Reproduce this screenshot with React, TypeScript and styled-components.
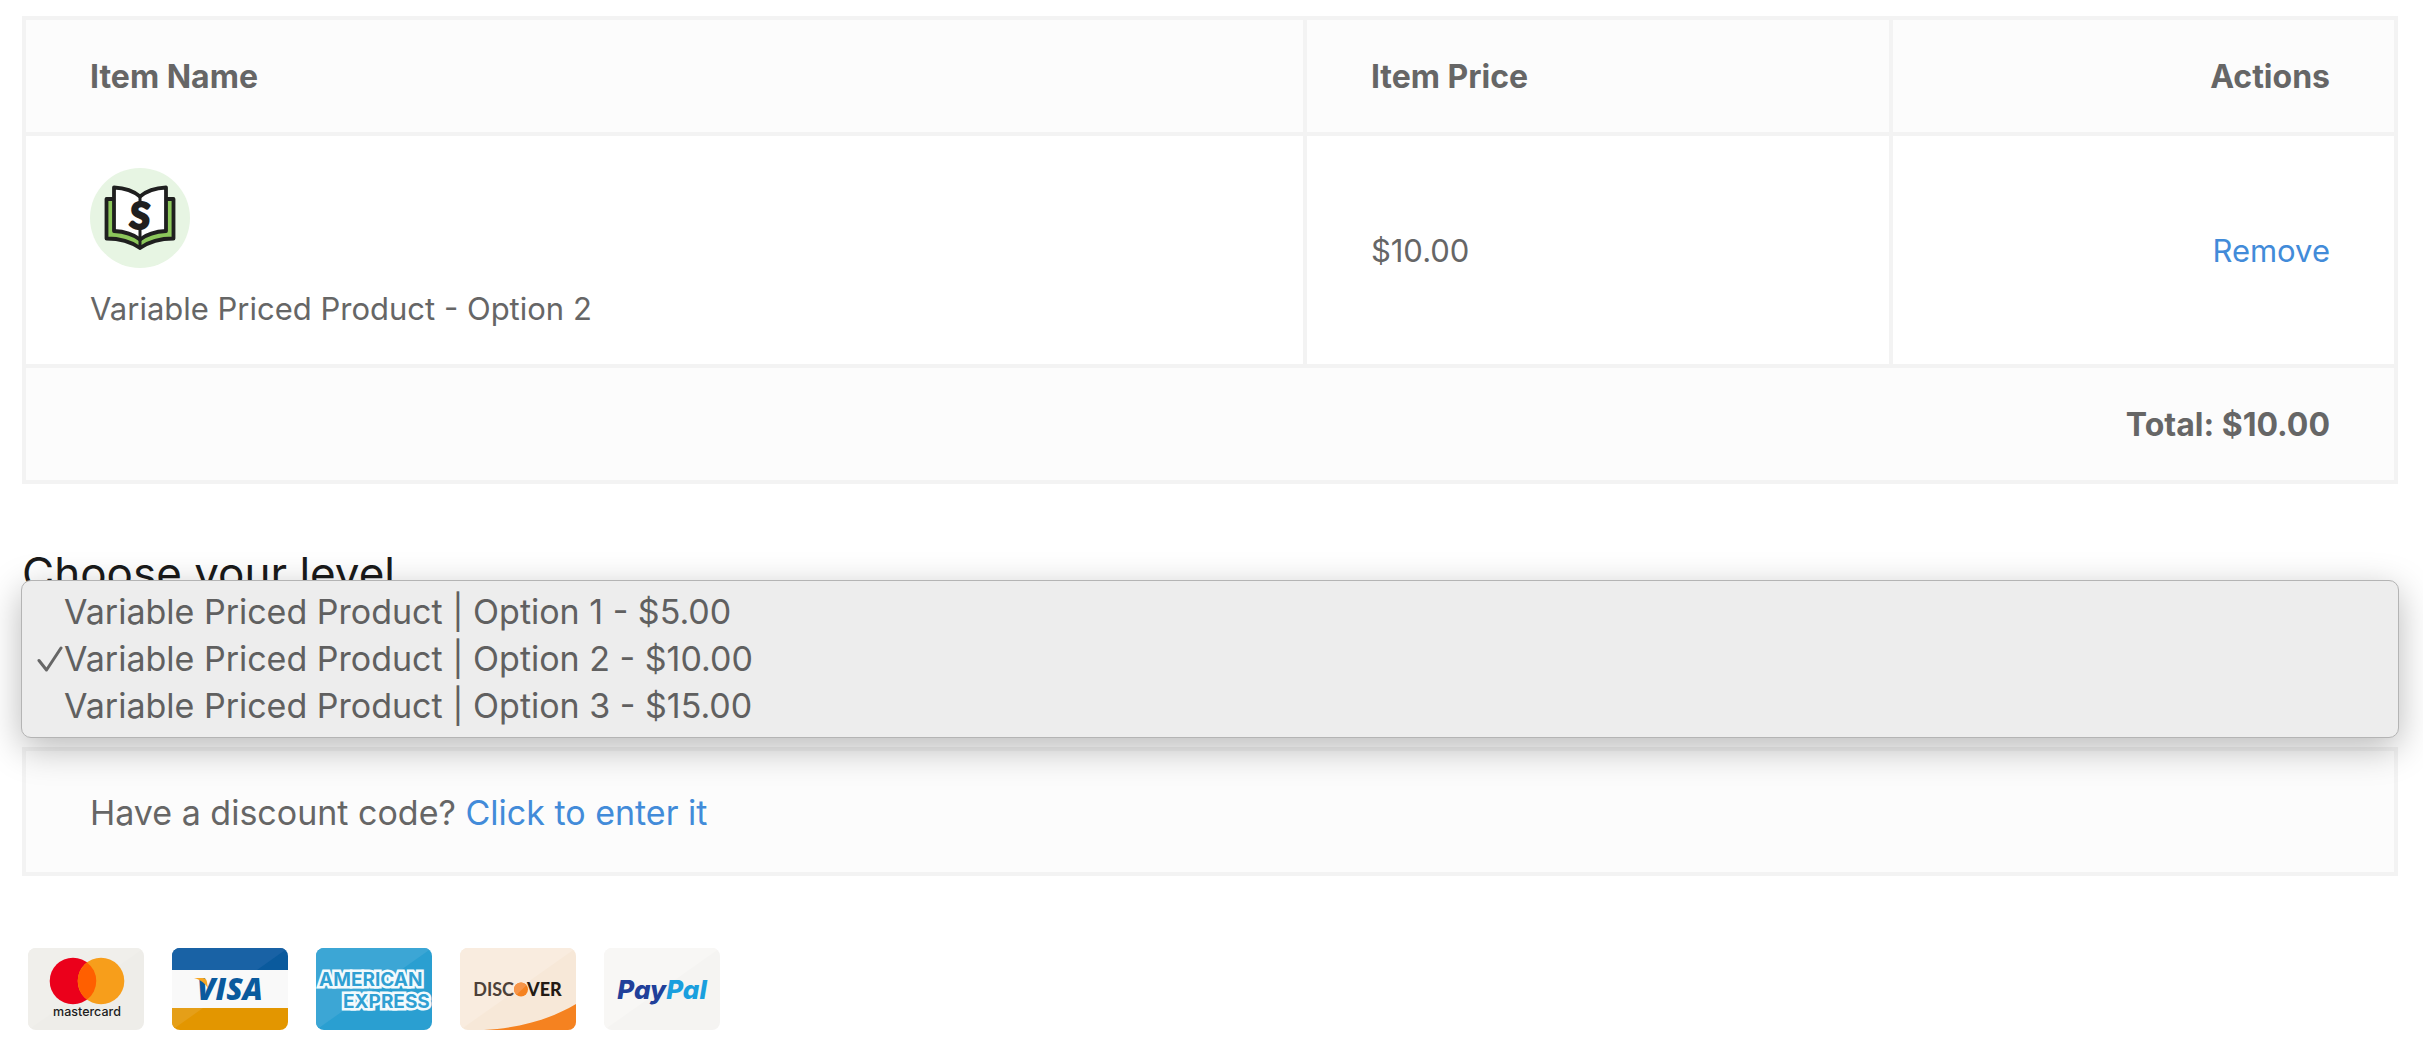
import React, { useState } from "react";
import styled, { createGlobalStyle } from "styled-components";

const GlobalStyle = createGlobalStyle`
  *, *::before, *::after { box-sizing: border-box; }
  body {
    margin: 0;
    background: #fff;
    color: #666;
    font-family: Inter, "Liberation Sans", sans-serif;
    font-size: 31px;
    line-height: 48px;
  }
`;

const Page = styled.main`
  padding: 16px 25px 24px 22px;
`;

const CartTable = styled.table`
  width: 100%;
  table-layout: fixed;
  border-collapse: collapse;
`;

const Column = styled.col<{ $share: string }>`
  width: ${(p) => p.$share};
`;

const HeadCell = styled.th<{ $end?: boolean }>`
  padding: 33px 64px 31px;
  border: 4px solid #f3f3f3;
  background: #fcfcfc;
  font-size: 32px;
  font-weight: 700;
  text-align: ${(p) => (p.$end ? "right" : "left")};
`;

const Cell = styled.td<{ $end?: boolean }>`
  padding: 32px 64px 31px;
  border: 4px solid #f3f3f3;
  vertical-align: middle;
  text-align: ${(p) => (p.$end ? "right" : "left")};
`;

const ItemBlock = styled.div`
  display: flex;
  flex-direction: column;
  gap: 17px;
`;

const TextLink = styled.a`
  color: #428bd9;
  text-decoration: none;
`;

const LevelSection = styled.section`
  margin: 61px 0 53px;
`;

const LevelHeading = styled.h2`
  margin: 0 0 23px;
  color: #1a1a1a;
  font-size: 44px;
  font-weight: 400;
  line-height: 56px;
`;

const LevelField = styled.div`
  position: relative;
`;

const LevelSelect = styled.select`
  display: block;
  width: 100%;
  height: 70px;
  padding: 0 40px;
  border: 2px solid #ddd;
  border-radius: 8px;
  background: #fff;
  color: #666;
  font: inherit;
`;

const Menu = styled.div`
  position: absolute;
  top: -44px;
  left: -1px;
  right: -1px;
  display: flex;
  flex-direction: column;
  padding: 7px 0 8px;
  border: 1px solid #b4b4b4;
  border-radius: 10px;
  background: #ededed;
  box-shadow: 0 10px 36px rgba(0, 0, 0, 0.28);
`;

const MenuOption = styled.button`
  display: flex;
  align-items: center;
  padding: 0 13px;
  border: 0;
  background: none;
  color: #606060;
  font-family: inherit;
  font-size: 34px;
  font-weight: 400;
  line-height: 47px;
  text-align: left;
`;

const CheckSlot = styled.span`
  display: flex;
  justify-content: center;
  width: 29px;
`;

const DiscountBox = styled.section`
  padding: 37px 64px 35px;
  border: 4px solid #f3f3f3;
  background: #fcfcfc;
  font-size: 34px;
  line-height: 49px;
`;

const CardList = styled.ul`
  display: flex;
  flex-wrap: wrap;
  gap: 28px;
  margin: 72px 0 0;
  padding: 0 6px;
  list-style: none;
`;

const CardItem = styled.li`
  width: 116px;
  height: 82px;
  overflow: hidden;
  border-radius: 8px;
`;

const Drawing = styled.svg`
  display: block;
`;

const BookIcon = () => (
  <Drawing width="100" height="100" viewBox="0 0 100 100" role="img" aria-label="Product">
    <circle cx="50" cy="50" r="50" fill="#e7f5e3" />
    <g stroke="#1f1f1f" strokeWidth="3.8" strokeLinejoin="round" strokeLinecap="round">
      <path d="M24 31H16.5V70.5C29 70.5 40 73 50 80C60 73 71 70.5 83.5 70.5V31H76Z" fill="#8cc75b" />
      <path d="M24 19.5C34 20 43 22.5 50 28.5C57 22.5 66 20 76 19.5V63C66 63.5 57 66 50 71.5C43 66 34 63.5 24 63Z" fill="#fff" />
      <path d="M50 28.5V33M50 62V80" fill="none" strokeWidth="3" />
    </g>
    <text x="50" y="61" transform="rotate(6 50 48)" textAnchor="middle" fontFamily="Lato, sans-serif" fontWeight="900" fontSize="37" fill="#1f1f1f" stroke="#1f1f1f" strokeWidth="2" strokeLinejoin="round">S</text>
  </Drawing>
);

const CheckIcon = () => (
  <Drawing width="26" height="28" viewBox="0 0 26 28" aria-hidden="true">
    <path d="M2 15.5L9.5 25L24 3" fill="none" stroke="#666" strokeWidth="3" strokeLinecap="round" strokeLinejoin="round" />
  </Drawing>
);

const Mastercard = () => (
  <Drawing width="116" height="82" viewBox="0 0 116 82" role="img" aria-label="Mastercard">
    <rect width="116" height="82" fill="#eeede9" />
    <path d="M0 0H116L0 82Z" fill="#f0efeb" />
    <circle cx="45" cy="33" r="23.3" fill="#eb001b" />
    <circle cx="73" cy="33" r="23.3" fill="#f79e1b" />
    <path d="M59 14.4A23.3 23.3 0 0 1 59 51.6A23.3 23.3 0 0 1 59 14.4Z" fill="#ff5f00" />
    <text x="59" y="68" textAnchor="middle" fontFamily="Inter, sans-serif" fontWeight="500" fontSize="12.5" fill="#1c1c1c">mastercard</text>
  </Drawing>
);

const Visa = () => (
  <Drawing width="116" height="82" viewBox="0 0 116 82" role="img" aria-label="Visa">
    <rect width="116" height="82" fill="#f9f9f9" />
    <rect width="116" height="22" fill="#0a5a9d" />
    <path d="M0 0H116L85 22H0Z" fill="#1962a5" />
    <rect y="60" width="116" height="22" fill="#e39600" />
    <path d="M0 60H31L0 82Z" fill="#e59f18" />
    <text x="58" y="52" textAnchor="middle" fontFamily="'Open Sans', sans-serif" fontWeight="800" fontStyle="italic" fontSize="30" fill="#0a5a9d">VISA</text>
    <path d="M22 30H30.5C33.5 30 34.5 31.5 35 34L36 41C34 35.5 29 32 22 30Z" fill="#f6a623" />
  </Drawing>
);

const Amex = () => (
  <Drawing width="116" height="82" viewBox="0 0 116 82" role="img" aria-label="American Express">
    <rect width="116" height="82" fill="#2a9fd1" />
    <path d="M0 0H116L0 82Z" fill="#3ca6d5" />
    <g fontFamily="Inter, sans-serif" fontWeight="700" fontSize="19" fill="#2f9fd2" stroke="#f2fafd" strokeWidth="5" paintOrder="stroke" strokeLinejoin="miter">
      <text x="3" y="38">AMERICAN</text>
      <text x="27" y="60">EXPRESS</text>
    </g>
  </Drawing>
);

const Discover = () => (
  <Drawing width="116" height="82" viewBox="0 0 116 82" role="img" aria-label="Discover">
    <rect width="116" height="82" fill="#f7e8d8" />
    <path d="M0 0H116L0 82Z" fill="#f9ecdf" />
    <path d="M24 82C60 80 91 71 116 56V82Z" fill="#f58220" />
    <g fontFamily="Lato, sans-serif" fontSize="18">
      <text x="54" y="48" textAnchor="end" fontWeight="700" fill="#4d4139">DISC</text>
      <text x="67" y="48" fontWeight="900" fill="#231a14">VER</text>
    </g>
    <circle cx="61" cy="41.5" r="7" fill="#f58220" />
    <path d="M54 41.5A7 7 0 0 1 66.5 37.2L56.5 46.8A7 7 0 0 1 54 41.5Z" fill="#f6954a" />
  </Drawing>
);

const PayPal = () => (
  <Drawing width="116" height="82" viewBox="0 0 116 82" role="img" aria-label="PayPal">
    <rect width="116" height="82" fill="#f5f4f2" />
    <path d="M0 0H116L0 82Z" fill="#f8f7f5" />
    <text x="58" y="51" textAnchor="middle" fontFamily="Inter, sans-serif" fontWeight="800" fontStyle="italic" fontSize="26">
      <tspan fill="#21409a">Pay</tspan>
      <tspan fill="#1a9fde">Pal</tspan>
    </text>
  </Drawing>
);

const levels = [
  { id: "1", name: "Option 1", price: "$5.00" },
  { id: "2", name: "Option 2", price: "$10.00" },
  { id: "3", name: "Option 3", price: "$15.00" },
];

const levelLabel = (l: (typeof levels)[number]) => `Variable Priced Product | ${l.name} - ${l.price}`;

const cards = [Mastercard, Visa, Amex, Discover, PayPal];

export default function App() {
  const [selected, setSelected] = useState("2");
  const [open, setOpen] = useState(true);
  const level = levels.find((l) => l.id === selected) ?? levels[1];

  return (
    <Page>
      <GlobalStyle />
      <CartTable>
        <colgroup>
          <Column $share="54%" />
          <Column $share="24.7%" />
          <Column $share="auto" />
        </colgroup>
        <thead>
          <tr>
            <HeadCell scope="col">Item Name</HeadCell>
            <HeadCell scope="col">Item Price</HeadCell>
            <HeadCell scope="col" $end>Actions</HeadCell>
          </tr>
        </thead>
        <tbody>
          <tr>
            <Cell>
              <ItemBlock>
                <BookIcon />
                <span>Variable Priced Product - {level.name}</span>
              </ItemBlock>
            </Cell>
            <Cell>{level.price}</Cell>
            <Cell $end>
              <TextLink href="#remove">Remove</TextLink>
            </Cell>
          </tr>
        </tbody>
        <tfoot>
          <tr>
            <HeadCell colSpan={3} $end>Total: {level.price}</HeadCell>
          </tr>
        </tfoot>
      </CartTable>

      <LevelSection>
        <LevelHeading>
          <label htmlFor="level">Choose your level</label>
        </LevelHeading>
        <LevelField>
          <LevelSelect id="level" value={selected} onChange={(e) => setSelected(e.target.value)}>
            {levels.map((l) => (
              <option key={l.id} value={l.id}>{levelLabel(l)}</option>
            ))}
          </LevelSelect>
          {open && (
            <Menu role="listbox" aria-label="Choose your level">
              {levels.map((l) => (
                <MenuOption
                  key={l.id}
                  type="button"
                  role="option"
                  aria-selected={l.id === selected}
                  onClick={() => {
                    setSelected(l.id);
                    setOpen(false);
                  }}
                >
                  <CheckSlot>{l.id === selected && <CheckIcon />}</CheckSlot>
                  {levelLabel(l)}
                </MenuOption>
              ))}
            </Menu>
          )}
        </LevelField>
      </LevelSection>

      <DiscountBox>
        Have a discount code? <TextLink href="#discount">Click to enter it</TextLink>
      </DiscountBox>

      <CardList>
        {cards.map((Card, i) => (
          <CardItem key={i}>
            <Card />
          </CardItem>
        ))}
      </CardList>
    </Page>
  );
}
